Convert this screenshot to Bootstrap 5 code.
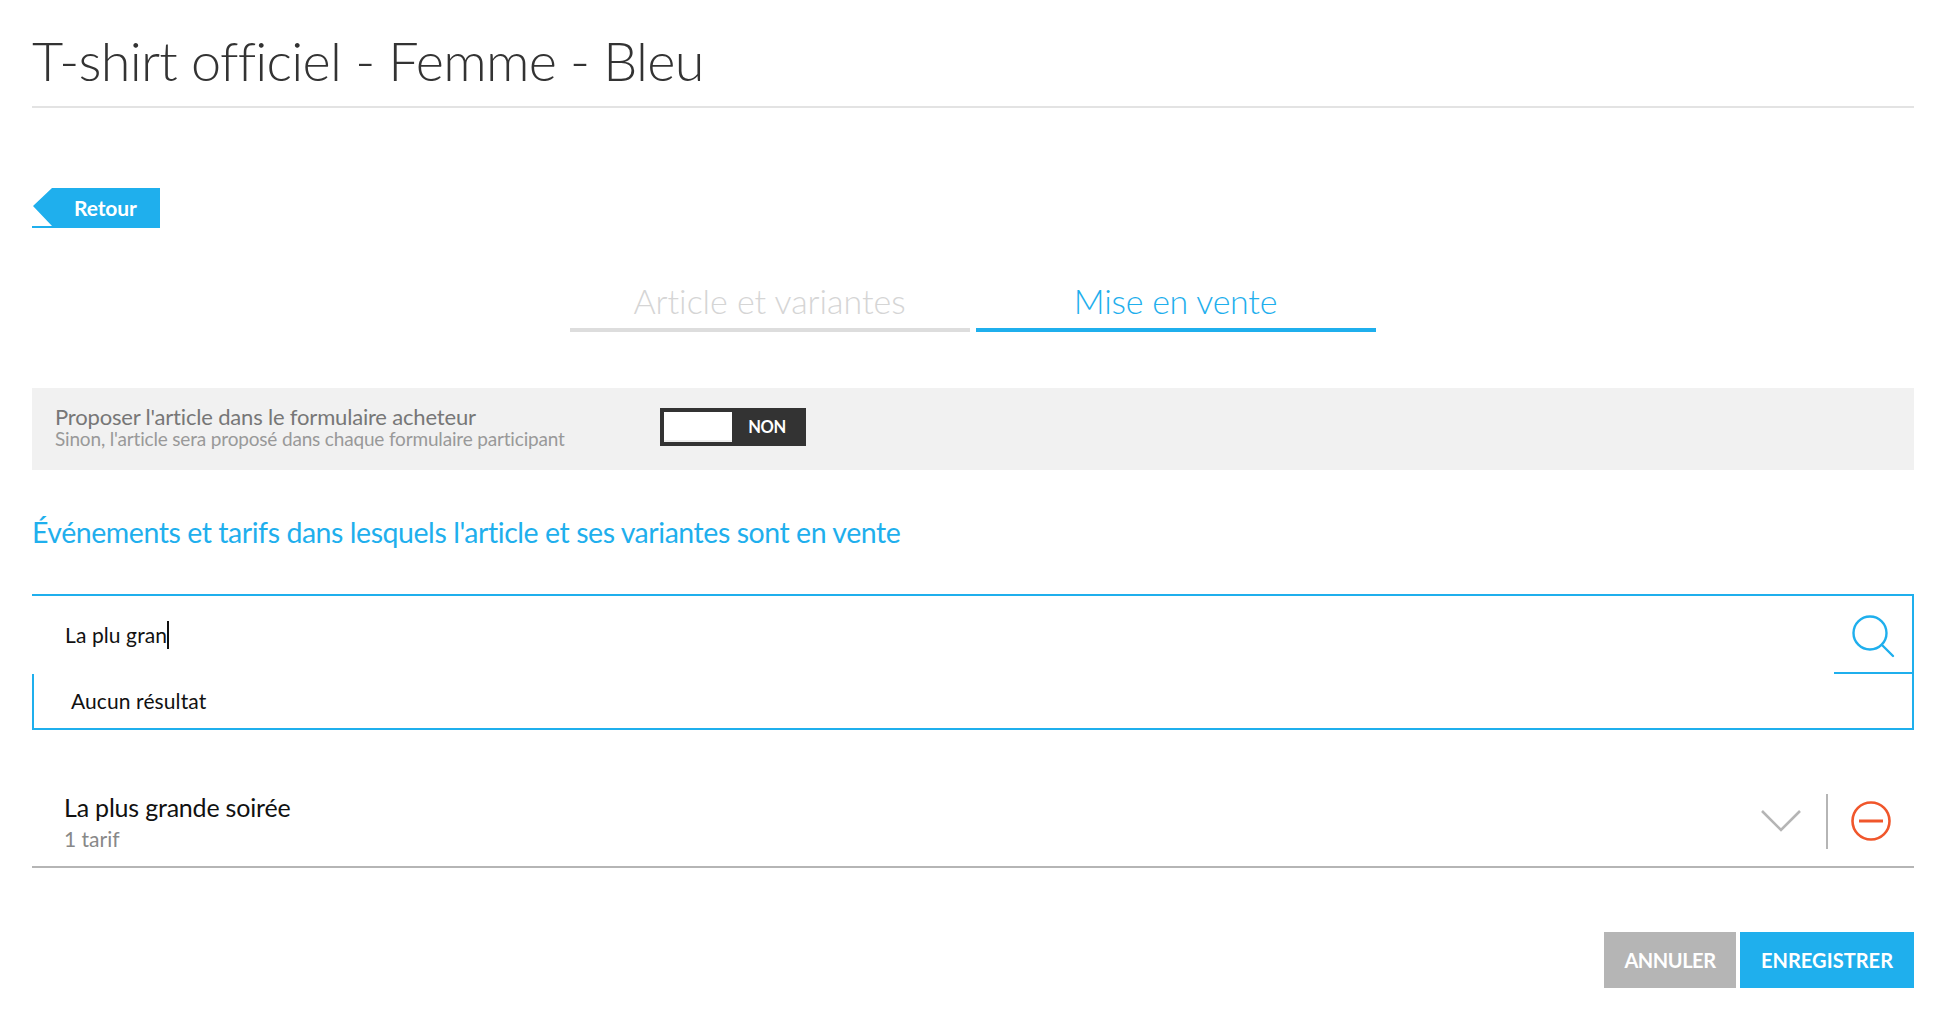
<!DOCTYPE html>
<html lang="fr">
<head>
<meta charset="utf-8">
<title>T-shirt officiel</title>
<link href="https://cdn.jsdelivr.net/npm/bootstrap@5.3.0/dist/css/bootstrap.min.css" rel="stylesheet">
<style>
:root{--blue:#1fafed;--gris:#b5b5b5}
html,body{height:100%}
body{font-family:"Lato","Liberation Sans",sans-serif;color:#333;background:#fff;overflow:hidden}
.page-shell{padding:0 26px 0 32px}
.page-title{font-weight:300;font-size:54px;line-height:62px;color:#333;margin:0;padding:30px 0 14px;border-bottom:2px solid #e3e3e3;letter-spacing:-.73px}
.back-wrap{margin-top:80px}
.back-btn{display:inline-flex;width:128px;height:40px;padding:0 0 0 42px;align-items:center;background:var(--blue);color:#fff;font-size:21px;font-weight:700;border:0;border-radius:0;clip-path:polygon(20px 0,100% 0,100% 100%,0 100%,0 38px,20px 38px,1px 18px);letter-spacing:-.1px}
.tab-row{margin-top:50px;gap:6px;margin-left:-1px}
.tab-item{width:400px;height:54px;text-align:center;font-size:34px;font-weight:300;line-height:45px;border-bottom:4px solid #ddd;color:#d5d5d5;letter-spacing:-.05px}
.tab-item.is-on{color:var(--blue);border-bottom-color:var(--blue);letter-spacing:-.25px}
.offer-band{margin-top:56px;height:82px;background:#f1f1f1;padding:0 23px}
.offer-text{width:605px;margin-bottom:2px}
.offer-main{font-size:22px;color:#777;letter-spacing:-.18px;line-height:22px}
.offer-sub{font-size:19px;color:#999;letter-spacing:-.17px;line-height:22px}
.toggle-box{width:146px;height:38px;background:#333;padding:4px;color:#fff;font-weight:700;font-size:16.5px;margin-top:-4px}
.toggle-knob{width:68px;height:30px;background:#fff;border-bottom:2px solid #eee}
.toggle-label{width:70px;text-align:center;letter-spacing:-.5px}
.events-title{font-size:28.5px;font-weight:400;color:var(--blue);margin:0;line-height:40px;padding-top:42px;letter-spacing:-.45px}
.search-shell{margin-top:42px;border-top:2px solid var(--blue);border-right:2px solid var(--blue)}
.search-line{height:78px;padding-left:33px;padding-bottom:1px;color:#111;font-size:21px;letter-spacing:.1px}
.typed-text{border-right:2px solid #111;line-height:28px;height:28px}
.search-btn{width:78px;height:78px;border-bottom:2px solid var(--blue);padding-left:17px;padding-top:8px}
.result-box{height:56px;border-left:2px solid var(--blue);border-bottom:2px solid var(--blue);padding-left:37px;padding-bottom:1px;font-size:21px;color:#111;letter-spacing:.1px}
.event-row{margin-top:37px;height:101px;border-bottom:2px solid var(--gris);padding-left:32px}
.event-info{padding-top:25px}
.event-name{font-size:25px;color:#111;line-height:30px;letter-spacing:-.2px}
.event-meta{font-size:21px;color:#888;line-height:30px;margin-top:2px}
.event-tools{padding-right:23px;margin-top:9px}
.tool-sep{width:2px;height:55px;background:var(--gris);margin:0 23px 0 25px}
.form-actions{margin-top:64px;gap:4px}
.act-btn{height:56px;border:0;border-radius:0;color:#fff;font-weight:700;font-size:20px;padding:0;letter-spacing:-.45px}
.act-btn:hover{color:#fff}
.act-cancel{width:132px;background:var(--gris)}
.act-save{width:174px;background:var(--blue);letter-spacing:.05px}
.act-cancel:hover{background:var(--gris)}
.act-save:hover{background:var(--blue)}
</style>
</head>
<body>
<div class="page-shell">
  <h1 class="page-title">T-shirt officiel - Femme - Bleu</h1>
  <div class="back-wrap"><a class="back-btn btn" href="#">Retour</a></div>
  <div class="tab-row d-flex justify-content-center">
    <div class="tab-item">Article et variantes</div>
    <div class="tab-item is-on">Mise en vente</div>
  </div>
  <div class="offer-band d-flex align-items-center">
    <div class="offer-text">
      <div class="offer-main">Proposer l'article dans le formulaire acheteur</div>
      <div class="offer-sub">Sinon, l'article sera proposé dans chaque formulaire participant</div>
    </div>
    <div class="toggle-box d-flex align-items-center">
      <div class="toggle-knob"></div>
      <div class="toggle-label">NON</div>
    </div>
  </div>
  <h2 class="events-title">Événements et tarifs dans lesquels l'article et ses variantes sont en vente</h2>
  <div class="search-shell">
    <div class="d-flex align-items-center justify-content-between">
      <div class="search-line d-flex align-items-center flex-grow-1"><span class="typed-text">La plu gran</span></div>
      <div class="search-btn d-flex align-items-center">
        <svg width="46" height="46" viewBox="0 0 46 46" fill="none" stroke="#1fafed" stroke-width="2.4" stroke-linecap="round"><circle cx="19" cy="18" r="16.5"/><path d="M31 30 42 41"/></svg>
      </div>
    </div>
    <div class="result-box d-flex align-items-center">Aucun résultat</div>
  </div>
  <div class="event-row d-flex justify-content-between">
    <div class="event-info">
      <div class="event-name">La plus grande soirée</div>
      <div class="event-meta">1 tarif</div>
    </div>
    <div class="event-tools d-flex align-items-center">
      <svg width="40" height="24" viewBox="0 0 40 24" fill="none" stroke="#b5b5b5" stroke-width="2.6"><path d="M1 2 20 21 39 2"/></svg>
      <div class="tool-sep"></div>
      <svg width="40" height="40" viewBox="0 0 40 40" fill="none" stroke="#f0562b" stroke-width="2.6"><circle cx="20" cy="20" r="18.5"/><path d="M8 20H32" stroke-width="3"/></svg>
    </div>
  </div>
  <div class="form-actions d-flex justify-content-end">
    <button type="button" class="btn act-btn act-cancel">ANNULER</button>
    <button type="button" class="btn act-btn act-save">ENREGISTRER</button>
  </div>
</div>
<script src="https://cdn.jsdelivr.net/npm/bootstrap@5.3.0/dist/js/bootstrap.bundle.min.js"></script>
</body>
</html>
